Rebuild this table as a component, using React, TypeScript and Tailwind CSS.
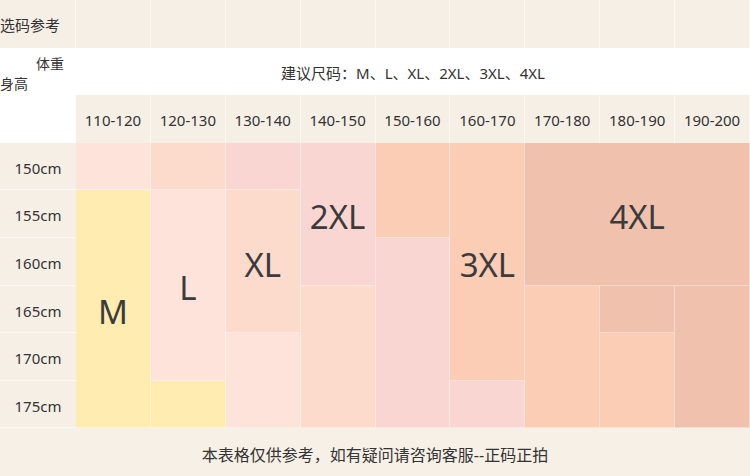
import React from "react";

const weights = ["110-120", "120-130", "130-140", "140-150", "150-160", "160-170", "170-180", "180-190", "190-200"];
const heights = ["150cm", "155cm", "160cm", "165cm", "170cm", "175cm"];

const colStart = ["col-start-2", "col-start-3", "col-start-4", "col-start-5", "col-start-6", "col-start-7", "col-start-8", "col-start-9", "col-start-10"];

type Block = { cls: string; label?: string };

// size blocks, placed on the grid (rows 4-9 are the height rows)
const blocks: Block[] = [
  { cls: "col-start-2 row-start-4 bg-[#fde3da]" },
  { cls: "col-start-2 row-start-5 row-span-5 bg-[#feecb0]", label: "M" },
  { cls: "col-start-3 row-start-4 bg-[#fcdbcc]" },
  { cls: "col-start-3 row-start-5 row-span-4 bg-[#fde3da]", label: "L" },
  { cls: "col-start-3 row-start-9 bg-[#feecb0]" },
  { cls: "col-start-4 row-start-4 bg-[#f9d6d2]" },
  { cls: "col-start-4 row-start-5 row-span-3 bg-[#fcdbcc]", label: "XL" },
  { cls: "col-start-4 row-start-8 row-span-2 bg-[#fde3da]" },
  { cls: "col-start-5 row-start-4 row-span-3 bg-[#f9d6d2]", label: "2XL" },
  { cls: "col-start-5 row-start-7 row-span-3 bg-[#fcdbcc]" },
  { cls: "col-start-6 row-start-4 row-span-2 bg-[#fbcdb5]" },
  { cls: "col-start-6 row-start-6 row-span-4 bg-[#f9d6d2]" },
  { cls: "col-start-7 row-start-4 row-span-5 bg-[#fbcdb5]", label: "3XL" },
  { cls: "col-start-7 row-start-9 bg-[#f9d6d2]" },
  { cls: "col-start-8 col-span-3 row-start-4 row-span-3 bg-[#f0c1ad]", label: "4XL" },
  { cls: "col-start-8 row-start-7 row-span-3 bg-[#fbcdb5]" },
  { cls: "col-start-9 row-start-7 bg-[#f0c1ad]" },
  { cls: "col-start-9 row-start-8 row-span-2 bg-[#fbcdb5]" },
  { cls: "col-start-10 row-start-7 row-span-3 bg-[#f0c1ad]" },
];

const heightRow = ["row-start-4", "row-start-5", "row-start-6", "row-start-7", "row-start-8", "row-start-9"];

export default function App() {
  return (
    <div
      className="grid h-[476px] w-[750px] grid-cols-[76px_repeat(9,1fr)] grid-rows-[repeat(10,1fr)] bg-white text-[#333]"
      style={{ fontFamily: '"Noto Sans", "Noto Sans CJK SC", sans-serif' }}
    >
      {/* top band */}
      <div className="col-start-1 row-start-1 flex items-center border-r border-white/50 bg-[#f6efe6] pt-[2px] text-[15px]">
        选码参考
      </div>
      {colStart.map((c) => (
        <div key={c} className={`${c} row-start-1 border-r border-white/50 bg-[#f6efe6]`} />
      ))}

      {/* corner */}
      <div className="col-start-1 row-start-2 row-span-2 flex flex-col pt-[6px] text-[14px] leading-[20px]">
        <span className="pr-[12px] text-right">体重</span>
        <span>身高</span>
      </div>
      <div className="col-start-2 col-span-9 row-start-2 flex items-center justify-center pt-[4px] text-[15px]">
        建议尺码：M、L、XL、2XL、3XL、4XL
      </div>

      {/* weights */}
      {weights.map((w, i) => (
        <div
          key={w}
          className={`${colStart[i]} row-start-3 flex items-center justify-center border-r border-white/50 bg-[#f6efe6] pt-[3px] text-[15px]`}
        >
          {w}
        </div>
      ))}

      {/* heights */}
      {heights.map((h, i) => (
        <div
          key={h}
          className={`col-start-1 ${heightRow[i]} flex items-center justify-center border-b border-white/60 bg-[#f6efe6] pt-[4px] text-[15px]`}
        >
          {h}
        </div>
      ))}

      {blocks.map((b, i) => (
        <div
          key={i}
          className={`${b.cls} flex items-center justify-center border-b border-r border-white/40 pt-[6px] text-[33px] text-[#3b3b3b]`}
        >
          {b.label}
        </div>
      ))}

      <div className="col-span-10 col-start-1 row-start-10 flex items-center justify-center bg-[#f7f0e6] pt-[5px] text-[16px]">
        本表格仅供参考，如有疑问请咨询客服--正码正拍
      </div>
    </div>
  );
}
